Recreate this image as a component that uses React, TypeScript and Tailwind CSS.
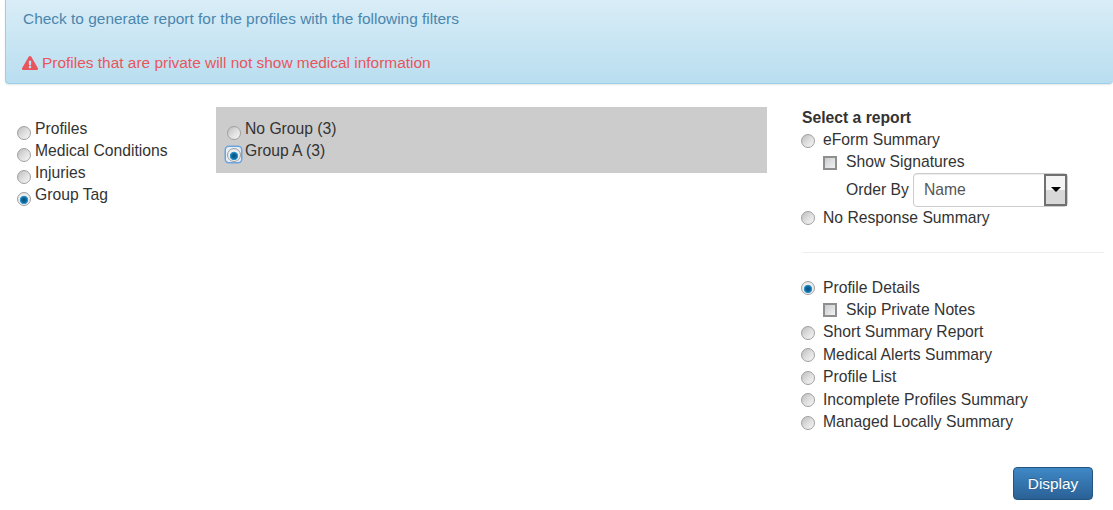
import { FaExclamationTriangle } from 'react-icons/fa';

const Radio = ({ checked = false, focused = false }: { checked?: boolean; focused?: boolean }) => (
  <span
    className={`flex h-[15px] w-[15px] shrink-0 items-center justify-center rounded-[3px] ${
      focused ? 'bg-[#e8eef6] shadow-[0_0_0_1.5px_#6fa3dc]' : ''
    }`}
  >
    <input
      type="radio"
      defaultChecked={checked}
      className={`h-[14px] w-[14px] appearance-none rounded-full border border-[#a0a0a0] ${
        checked
          ? 'bg-[radial-gradient(circle_at_50%_58%,#0a4f7c_0,#0f6ea6_30%,#3a9ad0_42%,#f2f2f2_50%,#d8d8d8_100%)]'
          : 'bg-[linear-gradient(135deg,#bdbdbd,#dedede_50%,#f8f8f8)]'
      }`}
    />
  </span>
);

const Checkbox = () => (
  <input
    type="checkbox"
    className="h-[14px] w-[14px] shrink-0 appearance-none border-2 border-[#8f8f8f] bg-[linear-gradient(135deg,#c9ccd0,#f2f2f2)]"
  />
);

const LeftRow = ({ label, checked, focused, pad }: { label: string; checked?: boolean; focused?: boolean; pad: string }) => (
  <label className="flex h-[22px]">
    <span className={pad}>
      <Radio checked={checked} focused={focused} />
    </span>
    <span className="leading-[22px]">{label}</span>
  </label>
);

const ReportRow = ({ label, checked }: { label: string; checked?: boolean }) => (
  <label className="flex h-[22.4px] items-start gap-[8px] leading-[22.4px]">
    <span className="-ml-[2px] mt-[4px]">
      <Radio checked={checked} />
    </span>
    <span>{label}</span>
  </label>
);

const SubCheck = ({ label }: { label: string }) => (
  <label className="ml-[21px] flex h-[22.4px] items-center gap-[9px] leading-[22.4px]">
    <Checkbox />
    <span>{label}</span>
  </label>
);

export default function App() {
  return (
    <div className="min-h-[510px] bg-white font-['Liberation_Sans',Arial,sans-serif] text-[15.7px] text-[#333333]">
      {/* Alert */}
      <div className="ml-[5px] h-[84px] rounded-b-[4px] border border-t-0 border-r-0 border-[#9acfea] bg-[linear-gradient(#d9edf7,#b9def0)] pl-[17px] pt-[8px] text-[15.45px] text-[#4a86ad] shadow-[0_1px_2px_rgba(0,0,0,0.1)]">
        <div className="leading-[22px]">Check to generate report for the profiles with the following filters</div>
        <div className="mt-[22px] flex items-center gap-1 leading-[22px] text-[#e8555c]">
          <FaExclamationTriangle className="-ml-px h-4 w-4" />
          <span>Profiles that are private will not show medical information</span>
        </div>
      </div>

      <div className="mt-[23px] flex">
        {/* Filter type */}
        <div className="w-[216px] pl-[16px] pt-[11px]">
          <LeftRow label="Profiles" pad="mr-[4px] mt-[7px]" />
          <LeftRow label="Medical Conditions" pad="mr-[4px] mt-[7px]" />
          <LeftRow label="Injuries" pad="mr-[4px] mt-[7px]" />
          <LeftRow label="Group Tag" checked pad="mr-[4px] mt-[7px]" />
        </div>

        {/* Filter values */}
        <div className="h-[66px] w-[551px] self-start bg-[#cccccc] pl-[10px] pt-[11px]">
          <LeftRow label="No Group (3)" pad="mr-[4px] mt-[7px]" />
          <LeftRow label="Group A (3)" checked focused pad="mr-[4px] mt-[7px]" />
        </div>

        {/* Report picker */}
        <div className="ml-[35px] w-[302px]">
          <div className="font-bold leading-[22px]">Select a report</div>
          <ReportRow label="eForm Summary" />
          <SubCheck label="Show Signatures" />
          <div className="ml-[44px] -mt-px flex h-[34px] items-center gap-[4px]">
            <span className="w-[63px]">Order By</span>
            <div className="flex h-[34px] w-[155px] items-center rounded-[4px] border border-[#cccccc] bg-white pl-[10px] shadow-[inset_0_1px_1px_rgba(0,0,0,0.075)]">
              <span className="flex-1 text-[#555555]">Name</span>
              <span className="flex h-[32px] w-[23px] items-center justify-center border-2 border-[#707070] bg-[linear-gradient(#f4f4f4_50%,#d8d8d8_50%)]">
                <span className="h-0 w-0 border-x-[5px] border-t-[5px] border-x-transparent border-t-black" />
              </span>
            </div>
          </div>
          <ReportRow label="No Response Summary" />
          <hr className="mt-[23px] mb-[23.5px] border-t border-[#eeeeee]" />
          <ReportRow label="Profile Details" checked />
          <SubCheck label="Skip Private Notes" />
          <ReportRow label="Short Summary Report" />
          <ReportRow label="Medical Alerts Summary" />
          <ReportRow label="Profile List" />
          <ReportRow label="Incomplete Profiles Summary" />
          <ReportRow label="Managed Locally Summary" />
          <div className="mr-[11px] mt-[33.5px] flex justify-end">
            <button className="h-[33px] w-[80px] rounded-[4px] border border-[#245580] bg-[linear-gradient(#3f88c6,#2a6195)] text-[15.4px] text-white [text-shadow:0_-1px_0_rgba(0,0,0,0.2)]">
              Display
            </button>
          </div>
        </div>
      </div>
    </div>
  );
}
